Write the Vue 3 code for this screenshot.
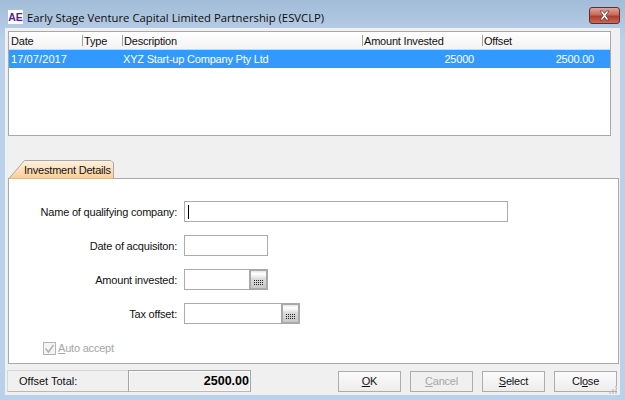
<script setup>
const columns = [
  { label: 'Date', width: 73 },
  { label: 'Type', width: 40 },
  { label: 'Description', width: 240 },
  { label: 'Amount Invested', width: 120 },
  { label: 'Offset', width: 128 }
]
const fields = [
  { label: 'Name of qualifying company:', width: 324, caret: true },
  { label: 'Date of acquisiton:', width: 84 },
  { label: 'Amount invested:', width: 84, picker: true },
  { label: 'Tax offset:', width: 116, picker: true }
]
const buttons = [
  { key: 'O', rest: 'K' },
  { key: 'C', rest: 'ancel', disabled: true },
  { key: 'S', rest: 'elect' },
  { before: 'Cl', key: 'o', rest: 'se' }
]
</script>

<template>
  <div class="window">
    <header class="titlebar">
      <span class="logo">AE</span>
      <span class="title">Early Stage Venture Capital Limited Partnership (ESVCLP)</span>
      <span class="close">
        <svg width="13" height="11" viewBox="0 0 13 11">
          <path d="M2 1h2.600l1.900 2.400L8.400 1H11L7.900 5.400 11 10H8.400L6.500 7.400 4.600 10H2l3.100-4.600z" fill="#fff" stroke="#5d3a36" stroke-width=".8" />
        </svg>
      </span>
    </header>

    <main class="client">
      <section class="list">
        <div class="list-head">
          <span v-for="c in columns" :key="c.label" class="head-cell" :style="{ width: c.width + 'px' }">{{ c.label }}</span>
        </div>
        <div class="list-row">
          <span class="cell date">17/07/2017</span>
          <span class="cell desc">XYZ Start-up Company Pty Ltd</span>
          <span class="cell amount">25000</span>
          <span class="cell offset">2500.00</span>
        </div>
      </section>

      <div class="tab-strip">
        <div class="tab">
          <svg class="tab-shape" width="106" height="19" viewBox="0 0 106 19">
            <defs>
              <linearGradient id="tabFill" x1="0" y1="0" x2="0" y2="1">
                <stop offset="0" stop-color="#fff2e0" />
                <stop offset="1" stop-color="#ffcc90" />
              </linearGradient>
            </defs>
            <path d="M.5 19 16.500.5H103l2.500 2.500V19z" fill="url(#tabFill)" stroke="#a9a9a9" />
          </svg>
          <span class="tab-text">Investment Details</span>
        </div>
      </div>

      <section class="panel">
        <div v-for="f in fields" :key="f.label" class="field">
          <label class="field-label">{{ f.label }}</label>
          <div class="input" :style="{ width: f.width + 'px' }">
            <span v-if="f.caret" class="caret"></span>
            <span v-if="f.picker" class="picker">
              <svg class="dots" width="9" height="5" viewBox="0 0 9 5">
                <path d="M0 0h1v1H0zM2 0h1v1H2zM4 0h1v1H4zM6 0h1v1H6zM8 0h1v1H8zM0 2h1v1H0zM2 2h1v1H2zM4 2h1v1H4zM6 2h1v1H6zM8 2h1v1H8zM0 4h1v1H0zM2 4h1v1H2zM4 4h1v1H4zM6 4h1v1H6zM8 4h1v1H8z" fill="#222" />
              </svg>
            </span>
          </div>
        </div>
        <div class="auto">
          <svg class="check" width="13" height="13" viewBox="0 0 13 13">
            <rect x=".5" y=".5" width="12" height="12" fill="#f4f4f4" stroke="#b4b4b4" />
            <path d="M2.500 6.500l3 3.500 5-7" fill="none" stroke="#b0b0b0" stroke-width="1.400" />
          </svg>
          <span class="auto-text"><u>A</u>uto accept</span>
        </div>
      </section>

      <footer class="footer">
        <div class="total-label">Offset Total:</div>
        <div class="total-value">2500.00</div>
        <div class="buttons">
          <button v-for="b in buttons" :key="b.key" type="button" class="btn" :class="{ disabled: b.disabled }">{{ b.before }}<u>{{ b.key }}</u>{{ b.rest }}</button>
        </div>
        <svg class="grip" width="10" height="10" viewBox="0 0 10 10">
          <path d="M7 1h2v2H7zM4 4h2v2H4zM7 4h2v2H7zM1 7h2v2H1zM4 7h2v2H4zM7 7h2v2H7z" fill="#d0d0d0" />
        </svg>
      </footer>
    </main>
  </div>
</template>

<style>
html, body { margin: 0; padding: 0; }
</style>

<style scoped>
.window {
  width: 625px;
  height: 400px;
  box-sizing: border-box;
  overflow: hidden;
  display: flex;
  flex-direction: column;
  padding: 0 5px 5px;
  background: linear-gradient(180deg, #a3bcd7 0, #b9d1ea 40px);
  font-family: "Liberation Sans", Arial, sans-serif;
  font-size: 11px;
  letter-spacing: -0.2px;
  color: #111;
}
.titlebar {
  height: 28px;
  flex: none;
  display: flex;
  align-items: center;
  position: relative;
  padding-top: 6px;
  box-sizing: border-box;
}
.logo {
  width: 15px;
  height: 14px;
  margin-left: 3px;
  background: #fff;
  color: #5a1d96;
  font: bold 10.500px/14px "Liberation Sans", sans-serif;
  letter-spacing: 0;
  text-align: center;
}
.title {
  margin-left: 4px;
  font-family: "Open Sans", sans-serif;
  font-size: 11.300px;
  letter-spacing: 0;
  color: #0c0c0c;
  white-space: nowrap;
}
.close {
  position: absolute;
  top: 7px;
  right: 0;
  width: 31px;
  height: 17px;
  box-sizing: border-box;
  border: 1px solid #6a2b27;
  border-radius: 3px;
  background: linear-gradient(180deg, #dfa59b 0, #c86a5c 45%, #b13c2c 55%, #c9695a 100%);
  display: flex;
  align-items: center;
  justify-content: center;
}
.client {
  flex: 1;
  min-height: 0;
  background: #f0f0f0;
  display: flex;
  flex-direction: column;
  padding: 3px 2px 0 3px;
}
.list {
  width: 603px;
  height: 105px;
  flex: none;
  box-sizing: border-box;
  border: 1px solid #a9a9a9;
  background: #fff;
}
.list-head {
  height: 18px;
  display: flex;
  background: linear-gradient(180deg, #fff, #f3f3f3);
  border-bottom: 1px solid #d5d5d5;
  box-sizing: border-box;
}
.head-cell {
  box-sizing: border-box;
  padding-left: 2px;
  line-height: 19px;
  white-space: nowrap;
  position: relative;
}
.head-cell:not(:first-child)::before {
  content: "";
  position: absolute;
  left: 0;
  top: 3px;
  height: 11px;
  width: 1px;
  background: #a0a0a0;
}
.list-row {
  height: 18px;
  display: flex;
  background: #3399ff;
  color: #fff;
  line-height: 18px;
  white-space: nowrap;
}
.cell { box-sizing: border-box; }
.date { width: 112px; padding-left: 2px; letter-spacing: 0.1px; }
.desc { width: 240px; padding-left: 2px; }
.amount { width: 113px; text-align: right; }
.offset { width: 120px; text-align: right; }
.tab-strip {
  height: 42px;
  flex: none;
  display: flex;
  align-items: flex-end;
}
.tab {
  width: 106px;
  height: 19px;
  margin-bottom: -1px;
  position: relative;
  z-index: 1;
  line-height: 20px;
  white-space: nowrap;
}
.tab-shape {
  position: absolute;
  inset: 0;
}
.tab-text {
  position: relative;
  margin-left: 16px;
}
.panel {
  width: 611px;
  height: 186px;
  flex: none;
  box-sizing: border-box;
  border: 1px solid #a9a9a9;
  background: #fff;
  padding-top: 22px;
  display: flex;
  flex-direction: column;
}
.field {
  display: flex;
  align-items: center;
  height: 21px;
  margin-bottom: 13px;
}
.field-label {
  width: 168px;
  text-align: right;
  white-space: nowrap;
  margin-right: 7px;
}
.input {
  height: 21px;
  box-sizing: border-box;
  border: 1px solid #ababab;
  background: #fff;
  display: flex;
  align-items: center;
  justify-content: space-between;
}
.caret {
  width: 1px;
  height: 14px;
  background: #000;
  margin-left: 3px;
}
.picker {
  width: 19px;
  height: 21px;
  margin: 0 -1px 0 auto;
  box-sizing: border-box;
  border: 2px solid #a9a9a9;
  background: linear-gradient(180deg, #e4e4e4 0, #fff 15%, #f2f2f2 30%, #dcdcdc 45%, #c8c8c8 100%);
  display: flex;
  align-items: center;
  justify-content: center;
}
.dots {
  display: block;
  margin-top: 5px;
}
.auto {
  display: flex;
  align-items: center;
  margin-top: 4px;
  margin-left: 34px;
  height: 14px;
}
.check { flex: none; }
.auto-text {
  margin-left: 2px;
  color: #a6a6a6;
  white-space: nowrap;
}
.footer {
  flex: 1;
  display: flex;
  align-items: flex-start;
  position: relative;
  padding-top: 6px;
  box-sizing: border-box;
}
.total-label {
  width: 121px;
  height: 22px;
  margin-left: -1px;
  box-sizing: border-box;
  padding-left: 11px;
  line-height: 21px;
  letter-spacing: 0;
  border-top: 1px solid #d8d8d8;
  border-bottom: 1px solid #b8b8b8;
  border-left: 1px solid #d8d8d8;
}
.total-value {
  width: 123px;
  height: 22px;
  box-sizing: border-box;
  border: 1px solid #a5a5a5;
  border-bottom-color: #b8b8b8;
  outline: 1px solid #f8f8f8;
  outline-offset: -2px;
  text-align: right;
  padding-right: 1px;
  font-weight: 700;
  font-size: 12.500px;
  letter-spacing: 0;
  line-height: 21px;
  color: #000;
}
.buttons {
  display: flex;
  gap: 9px;
  margin-left: 87px;
}
.btn {
  width: 63px;
  height: 21px;
  margin-top: 1px;
  padding: 0;
  box-sizing: border-box;
  border: 1px solid #adadad;
  background: linear-gradient(180deg, #fbfbfb, #ededed);
  font: inherit;
  letter-spacing: inherit;
  line-height: 19px;
  color: #111;
}
.btn.disabled { color: #a6a6a6; background: #f0f0f0; }
.grip {
  position: absolute;
  right: 0;
  bottom: 0;
}
</style>
